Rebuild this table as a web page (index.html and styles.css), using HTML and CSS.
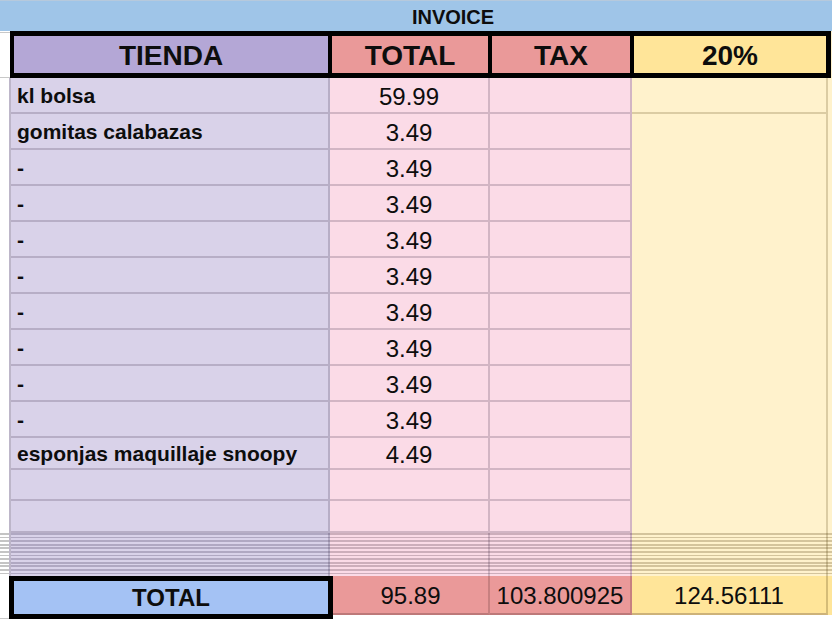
FILE: index.html
```html
<!DOCTYPE html>
<html lang="es">
<head>
<meta charset="utf-8">
<title>INVOICE</title>
<link rel="stylesheet" href="styles.css">
</head>
<body>
<div class="sheet">
  <div class="title"><span>INVOICE</span></div>

  <div class="head-row">
    <div class="m-head"></div>
    <div class="head">
      <div class="h h-store">TIENDA</div>
      <div class="h h-red">TOTAL</div>
      <div class="h h-red">TAX</div>
      <div class="h h-yellow">20%</div>
    </div>
    <div class="rest-head"></div>
  </div>

  <div class="grid">
    <div class="margin"></div>

    <div class="c store">kl bolsa</div><div class="c num">59.99</div><div class="c tax"></div><div class="c pct-first"></div>
    <div class="c store">gomitas calabazas</div><div class="c num">3.49</div><div class="c tax"></div>
    <div class="c pct-merged"></div>
    <div class="c store">-</div><div class="c num">3.49</div><div class="c tax"></div>
    <div class="c store">-</div><div class="c num">3.49</div><div class="c tax"></div>
    <div class="c store">-</div><div class="c num">3.49</div><div class="c tax"></div>
    <div class="c store">-</div><div class="c num">3.49</div><div class="c tax"></div>
    <div class="c store">-</div><div class="c num">3.49</div><div class="c tax"></div>
    <div class="c store">-</div><div class="c num">3.49</div><div class="c tax"></div>
    <div class="c store">-</div><div class="c num">3.49</div><div class="c tax"></div>
    <div class="c store">-</div><div class="c num">3.49</div><div class="c tax"></div>
    <div class="c store">esponjas maquillaje snoopy</div><div class="c num">4.49</div><div class="c tax"></div>
    <div class="c store"></div><div class="c num"></div><div class="c tax"></div>
    <div class="c store"></div><div class="c num"></div><div class="c tax"></div>

    <div class="rest"></div>
  </div>

  <div class="squash">
    <div class="sq sq-margin"></div>
    <div class="sq sq-store"></div>
    <div class="sq sq-pink"></div>
    <div class="sq sq-pink"></div>
    <div class="sq sq-yellow"></div>
    <div class="sq sq-rest"></div>
  </div>

  <div class="foot">
    <div class="f-margin"></div>
    <div class="f-total">TOTAL</div>
    <div class="f-cell f-red">95.89</div>
    <div class="f-cell f-red">103.800925</div>
    <div class="f-cell f-yellow">124.56111</div>
    <div class="f-rest"></div>
  </div>
</div>
</body>
</html>
```

FILE: styles.css
```css
html, body {
  margin: 0;
  padding: 0;
  background: #ffffff;
}

body {
  width: 832px;
  height: 619px;
  overflow: hidden;
  font-family: "Liberation Sans", Arial, sans-serif;
  color: #0d0d0d;
}

.sheet {
  width: 832px;
}

/* title bar */
.title {
  height: 31px;
  box-sizing: border-box;
  border-top: 1px solid #b6c9dc;
  background: #9fc5e8;
  display: flex;
  justify-content: center;
  align-items: center;
  padding: 3px 0 0 74px;
  font-weight: 700;
  font-size: 20px;
}

/* header row */
.head-row {
  display: flex;
  height: 47px;
}

.m-head {
  width: 10px;
  box-sizing: border-box;
  border-top: 1px solid #c8c8c8;
  border-bottom: 1px solid #c8c8c8;
  margin-top: 1px;
  height: 46px;
  background: #ffffff;
}

.head {
  width: 821px;
  box-sizing: border-box;
  background: #000000;
  padding: 5px 5px 5px 4px;
  display: grid;
  grid-template-columns: 314px 156px 138px 192px;
  column-gap: 4px;
}

.rest-head {
  width: 1px;
  background: #fff2cc;
}

.h {
  display: flex;
  align-items: center;
  justify-content: center;
  font-weight: 700;
  font-size: 28px;
  padding-top: 2px;
}

.h-store { background: #b4a7d6; }
.h-red { background: #ea9999; }
.h-yellow { background: #ffe599; }

/* data grid */
.grid {
  display: grid;
  grid-template-columns: 11px 319px 160px 142px 196px 4px;
  grid-template-rows: repeat(10, 36px) 32px 31px 32px;
}

.margin {
  grid-column: 1;
  grid-row: 1 / -1;
  background: #ffffff;
  border-right: 2px solid #bdb6c9;
}

.rest {
  grid-column: 6;
  grid-row: 1 / -1;
  background: #fff2cc;
}

.c {
  box-sizing: border-box;
  border-right: 2px solid rgba(50, 30, 60, 0.2);
  border-bottom: 2px solid rgba(50, 30, 60, 0.2);
  display: flex;
  align-items: center;
}

.store {
  grid-column: 2;
  background: #d9d2e9;
  font-weight: 700;
  font-size: 21px;
  padding: 2px 0 0 6px;
  white-space: nowrap;
}

.num {
  grid-column: 3;
  background: #fbdbe7;
  justify-content: center;
  font-size: 24px;
  padding-top: 3px;
}

.tax {
  grid-column: 4;
  background: #fbdbe7;
}

.pct-first {
  grid-column: 5;
  grid-row: 1;
  background: #fff2cc;
  border-color: rgba(90, 70, 20, 0.22);
}

.pct-merged {
  grid-column: 5;
  grid-row: 2 / 14;
  background: #fff2cc;
  border-bottom: none;
  border-color: rgba(90, 70, 20, 0.22);
}

/* squashed hidden rows */
.squash {
  display: grid;
  grid-template-columns: 11px 319px 160px 142px 196px 4px;
  height: 43px;
}

.sq {
  box-sizing: border-box;
  border-right: 2px solid rgba(50, 30, 60, 0.2);
}

.sq-margin {
  background: repeating-linear-gradient(to bottom, #c4c4c4 0 1.8px, #ffffff 1.8px 3.6px);
  border-right-color: #bdb6c9;
}

.sq-store {
  background: repeating-linear-gradient(to bottom, #b0a8c2 0 1.8px, #d9d2e9 1.8px 3.6px);
}

.sq-pink {
  background: repeating-linear-gradient(to bottom, #cdaebb 0 1.8px, #fbdbe7 1.8px 3.6px);
}

.sq-yellow {
  background: repeating-linear-gradient(to bottom, #d4c49c 0 1.8px, #fff2cc 1.8px 3.6px);
  border-right-color: rgba(90, 70, 20, 0.25);
}

.sq-rest {
  border-right: none;
  background: repeating-linear-gradient(to bottom, #d4c49c 0 1.8px, #fff2cc 1.8px 3.6px);
}

/* footer */
.foot {
  display: grid;
  grid-template-columns: 9px 324px 157px 142px 196px 4px;
  height: 43px;
  align-items: start;
}

.f-margin {
  height: 43px;
  background: #ffffff;
  box-sizing: border-box;
  border-bottom: 1px solid #c8c8c8;
}

.f-total {
  height: 43px;
  box-sizing: border-box;
  border: 5px solid #000000;
  background: #a4c2f4;
  display: flex;
  align-items: center;
  justify-content: center;
  font-weight: 700;
  font-size: 24px;
  padding-top: 1px;
}

.f-cell {
  height: 39px;
  box-sizing: border-box;
  border-right: 2px solid rgba(60, 30, 30, 0.2);
  border-bottom: 2px solid rgba(60, 30, 30, 0.25);
  display: flex;
  align-items: center;
  justify-content: center;
  font-size: 24px;
  padding-top: 3px;
}

.f-red { background: #ea9999; }
.f-yellow {
  background: #ffe599;
  border-right-color: rgba(90, 70, 20, 0.25);
}

.f-rest {
  height: 39px;
  background: #ffe599;
}
```
